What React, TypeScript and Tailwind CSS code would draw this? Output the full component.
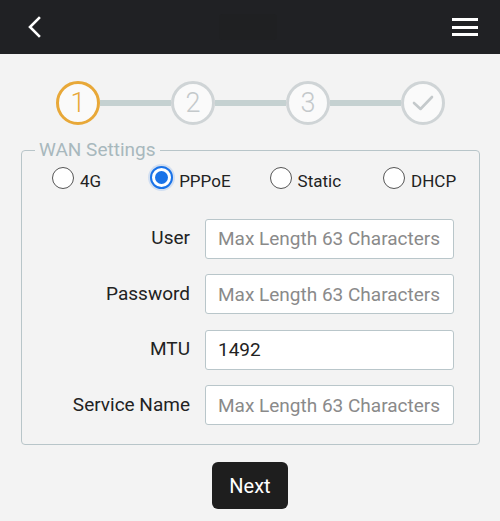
import React from 'react'

const steps = ['1', '2', '3', 'done']

function Radio({ checked }: { checked?: boolean }) {
  if (checked) {
    return (
      <span className="flex h-[23px] w-[23px] shrink-0 items-center justify-center rounded-full border-2 border-[#1a73e8] bg-white shadow-[0_0_0_2px_rgba(26,115,232,0.15)]">
        <span className="h-[13px] w-[13px] rounded-full bg-[#1a73e8]" />
      </span>
    )
  }
  return <span className="h-[22px] w-[22px] shrink-0 rounded-full border-[1.5px] border-[#555] bg-white" />
}

export default function App() {
  const fields = [
    { label: 'User', value: '' },
    { label: 'Password', value: '' },
    { label: 'MTU', value: '1492' },
    { label: 'Service Name', value: '' },
  ]

  return (
    <div className="min-h-[521px] w-[500px] bg-[#f3f3f3] font-['Roboto',sans-serif]">
      {/* Top bar */}
      <div className="flex h-[54px] items-center justify-between bg-[#202124] pl-[26px] pr-[22px]">
        <svg width="18" height="24" viewBox="0 0 18 24" fill="none">
          <path d="M13 3 L4 12 L13 21" stroke="white" strokeWidth="2.6" strokeLinecap="square" />
        </svg>
        <div className="h-[26px] w-[58px] rounded-sm bg-[#1f2022]" />
        <div className="flex w-[26px] flex-col gap-[4.5px]">
          <span className="h-[3px] w-full bg-white" />
          <span className="h-[3px] w-full bg-white" />
          <span className="h-[3px] w-full bg-white" />
        </div>
      </div>

      {/* Steps */}
      <div className="mt-[27px] flex items-center pl-[56px]">
        {steps.map((s, i) => (
          <React.Fragment key={s}>
            {i > 0 && <div className="h-[6px] w-[71px] bg-[#c5d1d1]" />}
            <div
              className={
                'flex h-[44px] w-[44px] items-center justify-center rounded-full border-[3px] bg-[#fafafa] text-[27px] font-light leading-none ' +
                (i === 0 ? 'border-[#e8a838] text-[#e8a838]' : 'border-[#cfd4d6] text-[#c4c9cb]')
              }
            >
              {s === 'done' ? (
                <svg width="24" height="18" viewBox="0 0 24 18" fill="none">
                  <path d="M3 9 L9.5 15 L21 3" stroke="#c4c9cb" strokeWidth="2.6" strokeLinecap="round" strokeLinejoin="round" />
                </svg>
              ) : (
                s
              )}
            </div>
          </React.Fragment>
        ))}
      </div>

      {/* WAN settings */}
      <fieldset className="ml-[21px] mt-[14px] w-[458px] rounded-[4px] border border-[#b8c5c9] pb-[19px] pr-[23px]">
        <legend className="ml-[13px] px-[4px] text-[19px] leading-[22px] text-[#a8b8bd]">WAN Settings</legend>

        <div className="flex items-center pl-[30px] text-[17px] text-[#222]">
          <label className="flex items-center gap-[6px]">
            <Radio />
            <span className="mt-[8px]">4G</span>
          </label>
          <label className="ml-[49px] flex items-center gap-[6px]">
            <Radio checked />
            <span className="mt-[8px]">PPPoE</span>
          </label>
          <label className="ml-[39px] flex items-center gap-[6px]">
            <Radio />
            <span className="mt-[8px]">Static</span>
          </label>
          <label className="ml-[42px] flex items-center gap-[6px]">
            <Radio />
            <span className="mt-[8px]">DHCP</span>
          </label>
        </div>

        <div className="mt-[24px] flex flex-col gap-[15.5px]">
          {fields.map((f) => (
            <div key={f.label} className="flex items-center">
              <span className="w-[168px] shrink-0 text-right text-[19px] text-[#222]">{f.label}</span>
              <input
                readOnly
                value={f.value}
                placeholder="Max Length 63 Characters"
                className="ml-[15px] h-[40px] w-[249px] rounded-[3px] border border-[#b9c6ca] bg-white px-[12px] text-[19px] text-[#222] outline-none placeholder:text-[#8a8a8a]"
              />
            </div>
          ))}
        </div>
      </fieldset>

      <div className="mt-[17px] flex justify-center">
        <button className="h-[47px] w-[76px] rounded-[6px] bg-[#1e1e1e] text-[20px] text-white">Next</button>
      </div>
    </div>
  )
}
